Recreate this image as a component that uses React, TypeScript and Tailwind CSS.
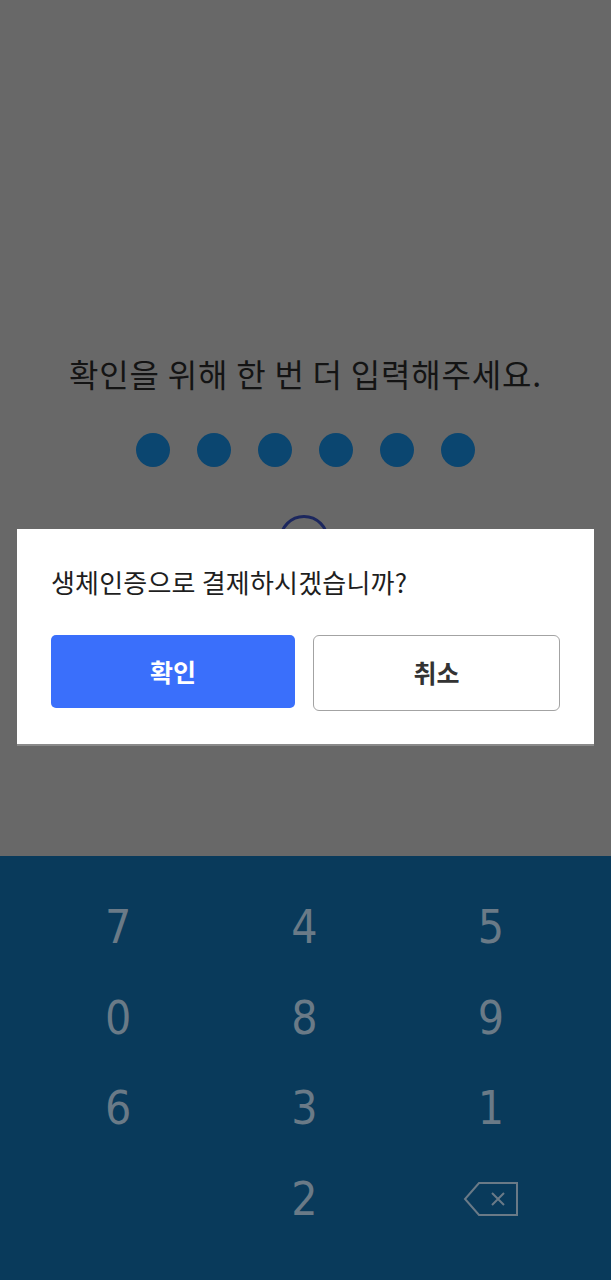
import React from 'react';

const keys = ['7', '4', '5', '0', '8', '9', '6', '3', '1', '', '2', 'del'];

const BackspaceIcon = () => (
  <svg width="58" height="36" viewBox="0 0 58 36" fill="none">
    <path d="M17 2 H55 V34 H17 L3 18 Z" stroke="#6a7a87" strokeWidth="2" strokeLinejoin="miter" />
    <path d="M30 12 L42 24 M42 12 L30 24" stroke="#6a7a87" strokeWidth="2" />
  </svg>
);

export default function App() {
  return (
    <div className="relative w-[611px] h-[1280px] overflow-hidden flex flex-col" style={{ fontFamily: '"Noto Sans CJK KR", "Noto Sans", sans-serif' }}>
      {/* dimmed page behind the modal */}
      <div className="h-[856px] bg-[#686868] flex flex-col items-center pt-[352px]">
        <p className="text-[32px] leading-[42px] text-[#141414] tracking-[0.8px]">확인을 위해 한 번 더 입력해주세요.</p>
        <div className="flex gap-[27px] mt-[39px] ml-[-1px]">
          {[0, 1, 2, 3, 4, 5].map(i => (
            <span key={i} className="w-[34px] h-[34px] rounded-full bg-[#0b4670]" />
          ))}
        </div>
        <div className="mt-[48px] mr-[4px] w-[50px] h-[50px] rounded-full border-[3px] border-[#1c275e]" />
      </div>

      {/* keypad */}
      <div className="flex-1 bg-[#093a5b] pl-[25px] pr-[27px] pt-[26px]">
        <div className="grid grid-cols-3">
          {keys.map((k, i) => (
            <div key={i} className="h-[90.5px] flex items-center justify-center">
              {k === 'del' ? (
                <BackspaceIcon />
              ) : (
                <span className="text-[46px] leading-none text-[#6a7a87]" style={{ fontFamily: '"DejaVu Sans Condensed", "DejaVu Sans", sans-serif' }}>{k}</span>
              )}
            </div>
          ))}
        </div>
      </div>

      {/* modal */}
      <div className="absolute left-[17px] top-[529px] w-[577px] h-[217px] bg-white border-b-[2px] border-[#8a8a8a] px-[34px] pt-[35px]">
        <p className="text-[26px] leading-[36px] text-[#1e1e1e] tracking-[0.2px]">생체인증으로 결제하시겠습니까?</p>
        <div className="flex items-start gap-[18px] mt-[35px]">
          <button className="w-[244px] h-[73px] rounded-[5px] bg-[#3a6ffb] text-white text-[25px] font-bold">확인</button>
          <button className="w-[247px] h-[76px] rounded-[6px] border-[1.5px] border-[#a3a3a3] bg-white text-[#333] text-[25px] font-bold">취소</button>
        </div>
      </div>
    </div>
  );
}
